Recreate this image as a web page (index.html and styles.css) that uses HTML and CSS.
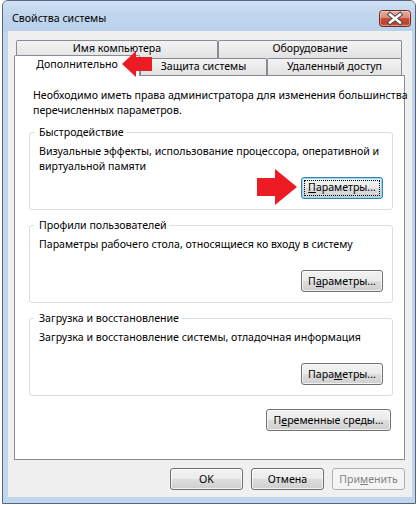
FILE: index.html
```html
<!DOCTYPE html>
<html lang="ru">
<head>
<meta charset="utf-8">
<title>Свойства системы</title>
<link rel="stylesheet" href="styles.css">
</head>
<body>
<div class="window">
  <div class="titlebar">
    <span class="title">Свойства системы</span>
    <span class="close">
      <svg width="32" height="17" viewBox="0 0 32 17">
        <defs>
          <linearGradient id="closeFill" x1="0" y1="0" x2="0" y2="1">
            <stop offset="0" stop-color="#eab0a2"/>
            <stop offset="0.45" stop-color="#d98b79"/>
            <stop offset="0.5" stop-color="#c8513b"/>
            <stop offset="0.8" stop-color="#bf3f28"/>
            <stop offset="1" stop-color="#d4664e"/>
          </linearGradient>
        </defs>
        <rect x="0.5" y="0.5" width="31" height="16" rx="3" fill="url(#closeFill)" stroke="#6e2a20"/>
        <rect x="1.5" y="1.5" width="29" height="14" rx="2" fill="none" stroke="rgba(255,255,255,0.35)"/>
        <path d="M11 4.5 L21 12.5 M21 4.5 L11 12.5" stroke="#4d4d4d" stroke-width="4.6" stroke-linecap="square"/>
        <path d="M11 4.5 L21 12.5 M21 4.5 L11 12.5" stroke="#ffffff" stroke-width="2.4" stroke-linecap="square"/>
      </svg>
    </span>
  </div>

  <div class="client">
    <div class="tabrow back">
      <div class="tab tab-name">Имя компьютера</div>
      <div class="tab tab-hw">Оборудование</div>
    </div>
    <div class="tabrow front">
      <div class="tab tab-adv active">Дополнительно</div>
      <div class="tab tab-prot">Защита системы</div>
      <div class="tab tab-remote">Удаленный доступ</div>
    </div>

    <div class="panel">
      <p class="intro">Необходимо иметь права администратора для изменения большинства<br>перечисленных параметров.</p>

      <fieldset class="group">
        <legend>Быстродействие</legend>
        <div class="group-body">
          <p>Визуальные эффекты, использование процессора, оперативной и<br>виртуальной памяти</p>
          <button class="btn btn-group btn-default"><span class="focus-ring"><u>П</u>араметры...</span></button>
        </div>
      </fieldset>

      <fieldset class="group">
        <legend>Профили пользователей</legend>
        <div class="group-body">
          <p>Параметры рабочего стола, относящиеся ко входу в систему</p>
          <button class="btn btn-group">П<u>а</u>раметры...</button>
        </div>
      </fieldset>

      <fieldset class="group">
        <legend>Загрузка и восстановление</legend>
        <div class="group-body">
          <p>Загрузка и восстановление системы, отладочная информация</p>
          <button class="btn btn-group">Пара<u>м</u>етры...</button>
        </div>
      </fieldset>

      <div class="env-row">
        <button class="btn btn-env">П<u>е</u>ременные среды...</button>
      </div>
    </div>

    <div class="footer">
      <button class="btn btn-dlg">OK</button>
      <button class="btn btn-dlg">Отмена</button>
      <button class="btn btn-dlg" disabled>При<u>м</u>енить</button>
    </div>
  </div>

  <!-- red pointer arrows drawn on top of the dialog -->
  <svg class="arrow arrow-tab" width="34" height="32" viewBox="0 0 34 32">
    <polygon points="2,16 16,3 16,9 32,9 32,23 16,23 16,29" fill="#ed1c24"/>
  </svg>
  <svg class="arrow arrow-btn" width="46" height="42" viewBox="0 0 46 42">
    <polygon points="43,21 21,3 21,12 3,12 3,30 21,30 21,39" fill="#ed1c24"/>
  </svg>
</div>
</body>
</html>
```

FILE: styles.css
```css
* {
  box-sizing: border-box;
}

body {
  margin: 0;
  background: #ffffff;
  font-family: "Noto Sans", "Open Sans", sans-serif;
  font-size: 10.6px;
  line-height: 15px;
  color: #000000;
}

/* window frame */
.window {
  position: relative;
  margin-left: 2px;
  width: 414px;
  height: 504px;
  border: 1px solid #56667a;
  border-radius: 6px 6px 0 0;
  background: #c0d6ee;
}

.titlebar {
  display: flex;
  height: 30px;
  padding: 0 4px 0 9px;
  border-radius: 5px 5px 0 0;
  background: linear-gradient(to bottom, #cfe0f3 0%, #c2d7ee 40%, #bad1eb 100%);
}

.title {
  flex: 1;
  margin-top: 10px;
  white-space: nowrap;
}

.close {
  margin-top: 9px;
  width: 32px;
  height: 17px;
}

.close svg {
  display: block;
}

/* client area */
.client {
  margin: 0 3px 0 5px;
  height: 466px;
  padding-top: 9px;
  background: #f0f0f0;
}

/* tabs */
.tabrow {
  display: flex;
}

.tabrow.back {
  margin-left: 8px;
  height: 18px;
}

.tabrow.front {
  margin-left: 6px;
  height: 17px;
}

.tab {
  flex: none;
  border: 1px solid #898c95;
  border-bottom: none;
  border-radius: 2px 2px 0 0;
  background: linear-gradient(to bottom, #f4f4f4 0%, #ebebeb 50%, #e2e2e2 100%);
  text-align: center;
  line-height: 13px;
  white-space: nowrap;
}

.back .tab {
  height: 18px;
  padding-top: 1px;
}

.front .tab {
  height: 17px;
  padding-top: 1px;
}

.tab-name { width: 202px; }
.tab-hw { width: 184px; }
.tab-adv { width: 126px; }
.tab-prot { width: 127px; }
.tab-remote { width: 135px; }

.tab.active {
  position: relative;
  z-index: 1;
  height: 21px;
  margin-top: -3px;
  padding-top: 2px;
  background: #ffffff;
}

/* tab page */
.panel {
  margin-left: 6px;
  width: 391px;
  height: 385px;
  border: 1px solid #898c95;
  background: #ffffff;
}

.intro {
  margin: 12px 0 0 18px;
  white-space: nowrap;
}

.group {
  margin: 7px 11px 0 14px;
  min-width: 0;
  padding: 4px 9px 10px 9px;
  border: 1px solid #d5dfe5;
  border-radius: 3px;
}

.group + .group {
  margin-top: 8px;
}

.group legend {
  margin-left: -5px;
  padding: 0 2px 0 5px;
  line-height: 15px;
  white-space: nowrap;
}

.group-body {
  display: flex;
  flex-direction: column;
  height: 55px;
}

.group-body p {
  margin: 0;
  white-space: nowrap;
}

/* push buttons */
.btn {
  font-family: inherit;
  font-size: 10.6px;
  line-height: 15px;
  height: 22px;
  padding: 0;
  color: #000000;
  border: 1px solid #707070;
  border-radius: 3px;
  background: linear-gradient(to bottom, #f2f2f2 0%, #ebebeb 48%, #dddddd 52%, #cfcfcf 100%);
  box-shadow: inset 0 0 0 1px rgba(255, 255, 255, 0.7);
  white-space: nowrap;
}

.btn u {
  text-decoration: underline;
  text-underline-offset: 1px;
}

.btn-group {
  width: 82px;
  margin-top: auto;
  align-self: flex-end;
}

.btn-default {
  border-color: #3c7fb1;
  box-shadow: inset 0 0 0 1px #8fdcf7;
  padding: 2px;
}

.focus-ring {
  display: block;
  height: 16px;
  line-height: 14px;
  outline: 1px dotted #000000;
  outline-offset: -1px;
}

.env-row {
  display: flex;
  justify-content: flex-end;
  margin-top: 13px;
  padding-right: 13px;
}

.btn-env {
  width: 125px;
}

.footer {
  display: flex;
  justify-content: flex-end;
  gap: 8px;
  width: 391px;
  margin: 8px 0 0 6px;
}

.btn-dlg {
  width: 73px;
}

.btn-dlg:disabled {
  color: #838383;
  border-color: #adb2b5;
  background: #f4f4f4;
  box-shadow: none;
}

/* annotation arrows */
.arrow {
  position: absolute;
  z-index: 2;
  display: block;
}

.arrow-tab {
  left: 117px;
  top: 47px;
}

.arrow-btn {
  left: 251px;
  top: 165px;
}
```
